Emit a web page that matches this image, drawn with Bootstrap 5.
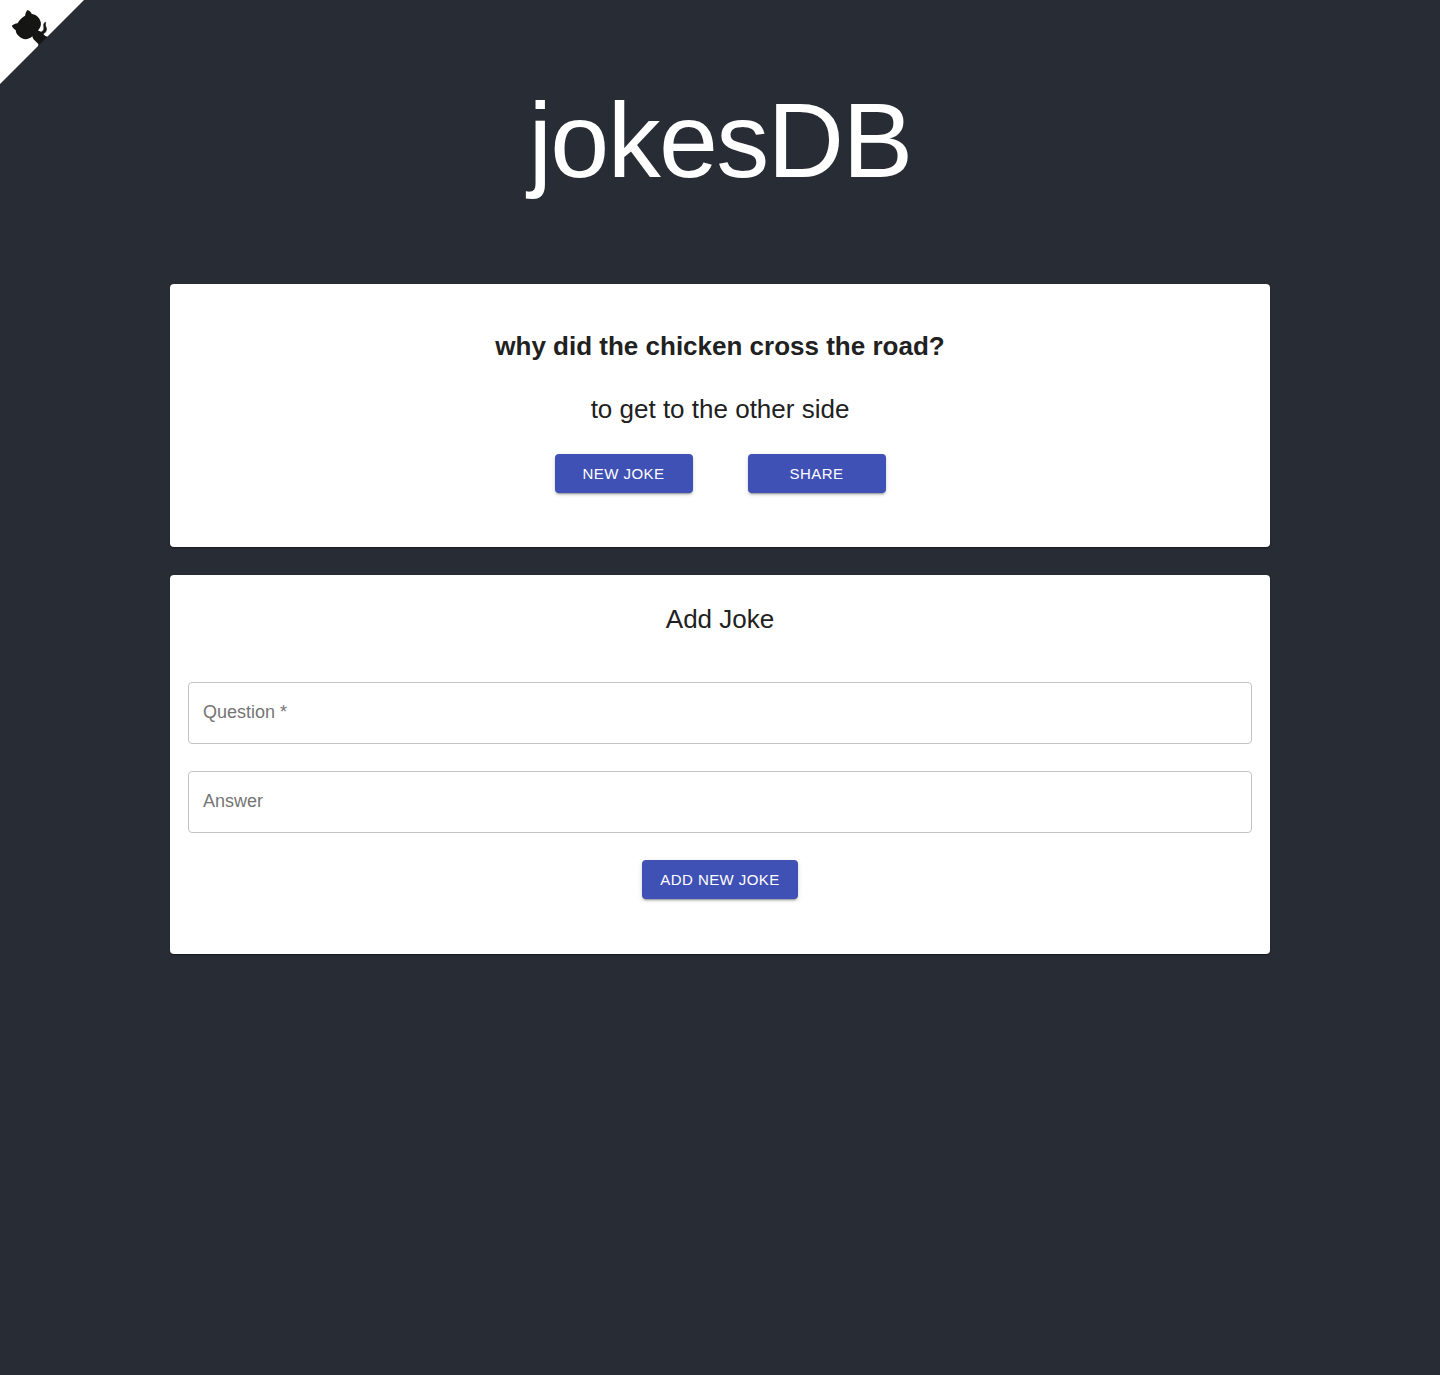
<!DOCTYPE html>
<html lang="en">
<head>
<meta charset="utf-8">
<meta name="viewport" content="width=device-width, initial-scale=1">
<title>jokesDB</title>
<link href="https://cdn.jsdelivr.net/npm/bootstrap@5.3.0/dist/css/bootstrap.min.css" rel="stylesheet">
<style>
  body {
    background: #282c34;
    color: #212121;
    font-family: "Liberation Sans", Arial, sans-serif;
  }
  .corner-link { top: -4px; left: 0; }
  .corner-link svg { display: block; width: 88px; height: 88px; fill: #fff; color: #151513; }
  .page-column { max-width: 1100px; }
  .site-title {
    font-size: 106px;
    line-height: 124px;
    font-weight: 400;
    letter-spacing: -0.01562em;
    margin: 78px 0 82px;
  }
  .panel {
    border: 0;
    border-radius: 4px;
    color: inherit;
    box-shadow: 0 2px 1px -1px rgba(0,0,0,.2), 0 1px 1px rgba(0,0,0,.14), 0 1px 3px rgba(0,0,0,.12);
  }
  .panel-joke { padding: 45px 18px 54px; margin-bottom: 28px; }
  .panel-form { padding: 27px 18px 55px; }
  .panel-text { font-size: 26px; line-height: 35px; }
  .joke-question { margin-bottom: 28px; }
  .joke-answer { margin-bottom: 27px; }
  .joke-actions { gap: 55px; }
  .btn-joke {
    --bs-btn-color: #fff;
    --bs-btn-bg: #3f51b5;
    --bs-btn-hover-color: #fff;
    --bs-btn-hover-bg: #303f9f;
    --bs-btn-active-color: #fff;
    --bs-btn-active-bg: #303f9f;
    --bs-btn-border-width: 0;
    --bs-btn-border-radius: 4px;
    --bs-btn-font-size: 15px;
    --bs-btn-line-height: 27px;
    --bs-btn-padding-y: 6px;
    --bs-btn-padding-x: 18px;
    letter-spacing: 0.02857em;
    min-width: 138px;
    box-shadow: 0 3px 1px -2px rgba(0,0,0,.2), 0 2px 2px rgba(0,0,0,.14), 0 1px 5px rgba(0,0,0,.12);
  }
  .joke-form { gap: 27px; margin-top: 45px; }
  .joke-form .form-floating > .form-control {
    height: 62px;
    min-height: 62px;
    padding: 18px 14px;
    font-size: 18px;
    line-height: 24px;
    border: 1px solid #c4c4c4;
    border-radius: 4px;
  }
  .joke-form .form-floating > label {
    padding: 17px 14px;
    font-size: 18px;
    line-height: 24px;
    color: #757575;
  }
</style>
</head>
<body>
<a class="corner-link position-absolute" href="#" aria-label="View source on GitHub">
  <svg viewBox="0 0 250 250" aria-hidden="true">
    <g transform="translate(250 0) scale(-1 1)">
      <path d="M0,0 L115,115 L130,115 L142,142 L250,250 L250,0 Z"/>
      <path fill="currentColor" stroke="currentColor" stroke-width="2" d="M128.3,109.0 C113.8,99.7 119.0,89.6 119.0,89.6 C122.0,82.7 120.5,78.6 120.5,78.6 C119.2,72.0 123.4,76.3 123.4,76.3 C127.3,80.9 125.5,87.3 125.5,87.3 C122.9,97.6 130.6,101.9 134.4,103.2"/>
      <path fill="currentColor" d="M115.0,115.0 C114.9,115.1 118.7,116.5 119.8,115.4 L133.7,101.6 C136.9,99.2 139.9,98.4 142.2,98.6 C133.8,88.0 127.5,74.4 143.8,58.0 C148.5,53.4 154.0,51.2 159.7,51.0 C160.3,49.4 163.2,43.6 171.4,40.1 C171.4,40.1 176.1,42.5 178.8,56.2 C183.1,58.6 187.2,61.8 190.9,65.4 C194.5,69.0 197.7,73.2 200.1,77.6 C213.8,80.2 216.3,84.9 216.3,84.9 C212.7,93.1 206.9,96.0 205.4,96.6 C205.1,102.4 203.0,107.8 198.3,112.5 C181.9,128.9 168.3,122.5 157.7,114.1 C157.9,116.9 156.7,120.9 152.7,124.9 L141.0,136.5 C139.8,137.7 141.6,141.9 141.8,141.8 Z"/>
    </g>
  </svg>
</a>
<main class="page-column container-fluid px-0 pb-5 d-flex flex-column">
  <h1 class="site-title text-white text-center">jokesDB</h1>
  <section class="panel panel-joke card align-items-center text-center">
    <h2 class="panel-text joke-question fw-bold">why did the chicken cross the road?</h2>
    <p class="panel-text joke-answer">to get to the other side</p>
    <div class="joke-actions d-flex flex-wrap justify-content-center">
      <button type="button" class="btn btn-joke text-uppercase">New joke</button>
      <button type="button" class="btn btn-joke text-uppercase">Share</button>
    </div>
  </section>
  <section class="panel panel-form card">
    <h2 class="panel-text fw-normal text-center mb-0">Add Joke</h2>
    <form class="joke-form d-flex flex-column">
      <div class="form-floating">
        <input type="text" class="form-control" id="question" placeholder="Question" required>
        <label for="question">Question *</label>
      </div>
      <div class="form-floating">
        <input type="text" class="form-control" id="answer" placeholder="Answer">
        <label for="answer">Answer</label>
      </div>
      <button type="submit" class="btn btn-joke text-uppercase align-self-center">Add new joke</button>
    </form>
  </section>
</main>
<script src="https://cdn.jsdelivr.net/npm/bootstrap@5.3.0/dist/js/bootstrap.bundle.min.js"></script>
</body>
</html>
